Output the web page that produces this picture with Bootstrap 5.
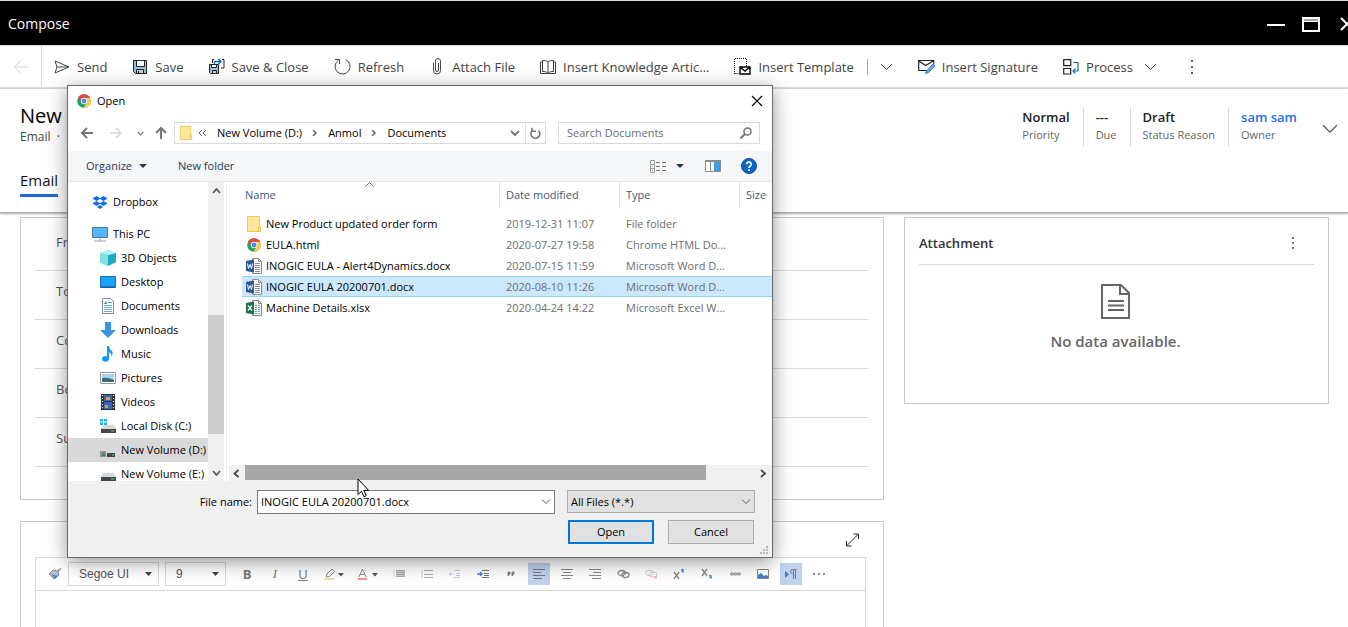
<!DOCTYPE html>
<html lang="en">
<head>
<meta charset="utf-8">
<meta name="viewport" content="width=device-width, initial-scale=1">
<title>Compose</title>
<link href="https://cdn.jsdelivr.net/npm/bootstrap@5.3.0/dist/css/bootstrap.min.css" rel="stylesheet">
<style>
:root { --line: #d8d8d8; --ink: #444; }
body { font-family: "Open Sans", "Noto Sans", sans-serif; font-size: 13px; line-height: 18px; color: #000; background: #fff; }
svg { display: block; flex: none; }
button, input, select { font-family: inherit; }
.plain { border: 0; background: none; padding: 0; color: inherit; }
input:focus { outline: 0; }

/* window title and command bar */
.title-bar { background: #000; color: #fff; height: 45px; border-top: 1px solid #d5dbe0; padding: 2px 0 0 8px; }
.title-bar h1 { font-size: 14px; line-height: 20px; }
.cmd-bar { height: 44px; border-top: 1px solid var(--line); border-bottom: 2px solid var(--line); color: var(--ink); }
.back-zone { width: 42px; border-right: 1px solid var(--line); }
.cmd { display: flex; align-items: center; gap: 7px; padding: 0 13px 0 12px; white-space: nowrap; border: 0; background: none; color: inherit; height: 100%; }
.cmd-split { width: 1px; height: 16px; background: #aaa; }

/* record header */
.rec-head { height: 124px; border-bottom: 1px solid #b3b3b3; box-shadow: 0 1px 2px rgba(0,0,0,.35); padding: 15px 10px 0 20px; }
.rec-head h2 { font-size: 20px; line-height: 24px; font-weight: 500; }
.rec-sub { font-size: 12px; color: #444; }
.tab-on { font-size: 15px; font-weight: 500; color: #111; line-height: 20px; padding: 0 0 4px; border-bottom: 3px solid #2266e3; text-decoration: none; }
.fact { padding: 0 13px 0 12px; height: 38px; border-right: 1px solid var(--line); line-height: 18px; }
.fact:last-of-type { border-right: 0; }
.fact b { display: block; font-weight: 600; color: #222; }
.fact span { display: block; font-size: 11px; color: #666; }
.fact a { font-weight: 600; color: #1f6ff0; text-decoration: none; display: block; }

/* form panels */
.form-grid { display: grid; grid-template-columns: 864fr 425fr; gap: 20px; padding: 4px 19px 0 20px; }
.form-col { gap: 21px; }
.panel { border: 1px solid #c8c8c8; background: #fff; }
.field { height: 49px; border-bottom: 1px solid var(--line); padding: 0 0 8px 21px; color: #555; gap: 20px; }
.field label { width: 120px; }
.fields { padding: 4px 15px 32px 14px; }
.attach-head { margin: 0 14px; height: 47px; border-bottom: 1px solid var(--line); padding: 3px 16px 0 0; font-weight: 600; color: #333; }
.empty-note { font-size: 15px; line-height: 20px; font-weight: 600; color: #666; }
.empty { padding: 19px 2px 52px 0; gap: 11px; }

/* rich text editor */
.editor { border: 1px solid var(--line); border-bottom: 0; margin: 0 17px 0 14px; }
.ed-tools { height: 33px; border-bottom: 1px solid var(--line); gap: 6px; padding-left: 8px; color: #777; }
.ed-btn { width: 22px; height: 22px; display: flex; align-items: center; justify-content: center; border: 0; padding: 0; background: none; color: inherit; flex: none; }
.ed-btn.wide { width: 28px; }
.ed-btn.on { background: #c1d1f0; }
.ed-select { height: 24px; border: 1px solid var(--line); border-radius: 0; font: 12px/18px "Liberation Sans", sans-serif; color: #555; padding: 0 10px; appearance: none; background: #fff url("data:image/svg+xml,%3Csvg xmlns='http://www.w3.org/2000/svg' width='7' height='4'%3E%3Cpath d='M0 0h7L3.500 4z' fill='%23444'/%3E%3C/svg%3E") no-repeat right 6px center; }
.ed-font { width: 91px; margin-left: -4px; }
.ed-size { width: 61px; }
.ed-body { height: 36px; border: 0; width: 100%; display: block; resize: none; }

/* file dialog */
.file-dlg { position: absolute; left: 67px; top: 85px; width: 706px; border: 1px solid #6a6a6a; background: #fff; box-shadow: 0 4px 18px rgba(0,0,0,.42); font-size: 11px; line-height: 16px; }
.dlg-title { height: 30px; padding: 0 9px; gap: 6px; }
.dlg-nav { padding: 6px 12px 7px 12px; color: #666; }
.box { border: 1px solid #d9d9d9; height: 22px; background: #fff; }
.addr { flex: 1; color: #000; gap: 10px; padding-left: 4px; margin-left: 7px; }
.search-box { width: 202px; padding: 0 7px 0 8px; margin-left: 12px; }
.search-box input { color: #000; }
.search-box input::placeholder { color: #6d6d6d; opacity: 1; }
.dlg-cmd { height: 31px; background: #f5f6f7; border-bottom: 1px solid #e4e6e8; padding: 0 15px 0 18px; color: #1e395b; }
.dlg-body { height: 299px; }
.tree { width: 140px; padding-top: 8px; overflow: hidden; flex: none; }
.tree a { display: flex; align-items: center; gap: 5px; height: 24px; padding-left: 32px; color: #000; text-decoration: none; white-space: nowrap; }
.tree a.root { padding-left: 24px; }
.tree a.current { background: #d9d9d9; }
.v-scroll { width: 16px; background: #f0f0f0; padding: 5px 0 4px; flex: none; }
.v-thumb { width: 16px; height: 119px; background: #cdcdcd; margin-bottom: 36px; }
.list-pane { flex: 1; min-width: 0; margin-left: 2px; border-left: 1px solid #ececec; }
.files { margin-left: 15px; flex: 1; overflow: hidden; position: relative; }
.files table { width: 100%; table-layout: fixed; border-collapse: separate; border-spacing: 0; }
.files th { font-weight: 400; padding: 0 0 5px; color: #44597a; }
.files th div { height: 26px; padding: 5px 0 0 6px; border-left: 1px solid #e2e2e2; }
.files th:first-child div { border: 0; padding-left: 3px; }
.files td { height: 21px; padding: 0 0 0 7px; color: #6d6d6d; white-space: nowrap; overflow: hidden; }
.files td:first-child { padding-left: 4px; color: #000; }
.files tr.picked td { background: #cce8ff; box-shadow: inset 0 1px #99d1ff, inset 0 -1px #99d1ff; }
.sort-mark { position: absolute; left: 123px; top: 0; }
.h-scroll { height: 16px; background: #f0f0f0; padding: 0 5px 0 4px; gap: 6px; margin-left: 2px; }
.h-thumb { width: 461px; height: 15px; background: #a6a6a6; align-self: flex-start; }
.dlg-foot { background: #f0f0f0; padding: 9px 17px 13px 0; position: relative; }
.dlg-foot label { padding: 4px 5px 0 0; }
.combo { border: 1px solid #7a7a7a; background: #fff; width: 298px; height: 24px; padding: 0 3px; margin-right: 12px; }
.type-select { width: 188px; height: 23px; border: 1px solid #adadad; border-radius: 0; background: #e1e1e1 url("data:image/svg+xml,%3Csvg xmlns='http://www.w3.org/2000/svg' width='10' height='6'%3E%3Cpath d='M1 .5l4 4 4-4' fill='none' stroke='%23555'/%3E%3C/svg%3E") no-repeat right 3px center; padding: 0 3px; appearance: none; color: #000; }
.dlg-actions { gap: 14px; margin: 6px 1px 0 0; }
.dlg-btn { width: 86px; height: 24px; border: 1px solid #adadad; background: #e1e1e1; color: #000; padding: 0; }
.dlg-btn.main { border: 2px solid #0078d7; }
.grip { position: absolute; right: 3px; bottom: 2px; }
.pointer { position: absolute; left: 357px; top: 478px; }
</style>
</head>
<body class="vh-100 overflow-hidden position-relative">

<svg width="0" height="0" class="position-absolute" aria-hidden="true">
  <symbol id="chrome" viewBox="0 0 16 16"><circle cx="8" cy="8" r="7.800" fill="#1da462"/><path d="M1.200 4.200A7.800 7.800 0 0 1 14.900 4.500H8A3.500 3.500 0 0 0 4.900 9.700z" fill="#dd4b3e"/><path d="M14.900 4.500A7.800 7.800 0 0 1 7.500 15.800L11 9.700A3.500 3.500 0 0 0 8 4.500z" fill="#ffcd42"/><circle cx="8" cy="8" r="3.600" fill="#fff"/><circle cx="8" cy="8" r="2.800" fill="#4a8af4"/></symbol>
  <symbol id="folder" viewBox="0 0 16 16"><path d="M1.500.5h12v10h1v5h-13z" fill="#ffe79a" stroke="#ecc852"/><path d="M12.500 10.500v5" stroke="#ecc852"/></symbol>
  <symbol id="word" viewBox="0 0 16 16"><path d="M6.500.5h6l3 3v12h-9z" fill="#fff" stroke="#8a8a8a"/><path d="M12.500.5v3h3M9 5.500h5M9 7.500h5M9 9.500h5M9 11.500h5M9 13.500h5" fill="none" stroke="#8a8a8a"/><path d="M0 3l8-1.500v13L0 13z" fill="#2b579a"/><path d="M1.500 5.500l1 5 1.500-4 1.500 4 1-5" fill="none" stroke="#fff"/></symbol>
  <symbol id="excel" viewBox="0 0 16 16"><path d="M6.500.5h6l3 3v12h-9z" fill="#fff" stroke="#8a8a8a"/><path d="M12.500.5v3h3" fill="none" stroke="#8a8a8a"/><path d="M9 5.500h2m1 0h2M9 7.500h2m1 0h2M9 9.500h2m1 0h2M9 11.500h2m1 0h2M9 13.500h2m1 0h2" stroke="#5fa583"/><path d="M0 3l8-1.500v13L0 13z" fill="#1e7145"/><path d="M2 5.500l4 5m0-5l-4 5" stroke="#fff" stroke-width="1.300"/></symbol>
  <symbol id="drive" viewBox="0 0 16 16"><path d="M3 7h11l2 4H1z" fill="#d5d8da"/><path d="M1 11h15v4H1z" fill="#43474b"/><path d="M11 12.500h3v1h-3z" fill="#3ee04a"/></symbol>
  <symbol id="chev" viewBox="0 0 12 8"><path d="M.500 1l5.500 5.500L11.500 1" fill="none" stroke="currentColor"/></symbol>
  <symbol id="smallchev" viewBox="0 0 10 6"><path d="M1 1l4 4 4-4" fill="none" stroke="currentColor" stroke-width="2"/></symbol>
  <symbol id="tri" viewBox="0 0 8 4"><path d="M0 0h8L4 4z" fill="currentColor"/></symbol>
</svg>

<header class="title-bar d-flex align-items-center">
  <h1 class="m-0 fw-normal">Compose</h1>
  <div class="ms-auto d-flex align-items-center gap-3 overflow-hidden">
    <button class="plain" aria-label="Minimize"><svg width="20" height="16"><path d="M1 9h18" stroke="#fff" stroke-width="2"/></svg></button>
    <button class="plain" aria-label="Maximize"><svg width="18" height="16"><path d="M1 2h16v13H1z" fill="none" stroke="#fff" stroke-width="2"/><path d="M2 4h14" stroke="#aaa" stroke-width="2"/><path d="M2 5.500h14" stroke="#fff"/></svg></button>
    <button class="plain" aria-label="Close"><svg width="8" height="16" class="ms-1"><path d="M1 2l12 12M1 14L13 2" stroke="#fff" stroke-width="2"/></svg></button>
  </div>
</header>

<nav class="cmd-bar d-flex align-items-center">
  <button class="plain back-zone h-100 d-flex align-items-center justify-content-center" aria-label="Back"><svg width="16" height="14"><path d="M15 7H1.500M8 .500L1.500 7 8 13.500" fill="none" stroke="#d0d0d0"/></svg></button>
  <button class="cmd"><svg width="16" height="16"><path d="M1 2l14 6-14 6 2-6zM3 8h12" fill="none" stroke="#444"/></svg>Send</button>
  <button class="cmd"><svg width="16" height="16"><path d="M1.500 1.500h13v13h-11l-2-2z" fill="#8fc3ee" stroke="#222"/><path d="M4.500 1.500h8v6h-8z" fill="#fff" stroke="#222"/><path d="M4.500 10.500h7v4h-7z" fill="#ccc" stroke="#222"/><path d="M6.500 12v2.500" stroke="#222"/></svg>Save</button>
  <button class="cmd"><svg width="16" height="17"><path d="M5 1.500H3.500V5M13 1.500h2V10h-3" fill="none" stroke="#222"/><path d="M5.500 6V3.500h6M9.500 1l2.500 2.500L9.500 6" fill="none" stroke="#1c6bb8" stroke-width="1.300"/><path d="M.5 6.500h9v9h-8l-1-1z" fill="#8fc3ee" stroke="#222"/><path d="M2.500 6.500h5v3h-5z" fill="#fff" stroke="#222"/><path d="M3.500 12.500h4v3h-4z" fill="#ccc" stroke="#222"/></svg>Save &amp; Close</button>
  <button class="cmd"><svg width="17" height="17"><path d="M11.500 1.600A7.500 7.500 0 1 1 4.500 2.200M1 1.500h4.500V6" fill="none" stroke="#444"/></svg>Refresh</button>
  <button class="cmd"><svg width="16" height="17"><path d="M4.500 4.500v8a3.500 3.500 0 0 0 7 0V3a2.500 2.500 0 0 0-5 0v9a1.500 1.500 0 0 0 3 0V5" fill="none" stroke="#444"/></svg>Attach File</button>
  <button class="cmd"><svg width="16" height="16"><path d="M8 3C6.500 1.500 4.500 1.500 2.500 1.500v11c2 0 4 0 5.500 2 1.500-2 3.500-2 5.500-2v-11c-2 0-4 0-5.500 1.500zv11M2.500 3H.5v11.500h15V3h-2" fill="none" stroke="#444"/></svg>Insert Knowledge Artic...</button>
  <button class="cmd"><svg width="17" height="17"><path d="M.500 16V.500h12V8M.500 15.500H5" fill="none" stroke="#000" stroke-dasharray="1 1"/><path d="M6 9h10v7H6zM6 9l5 4 5-4" fill="#fff" stroke="#000" stroke-width="1.400"/></svg>Insert Template</button>
  <span class="cmd-split"></span>
  <button class="cmd" aria-label="More templates"><svg width="13" height="8"><use href="#chev"/></svg></button>
  <button class="cmd"><svg width="17" height="15"><path d="M9 11.500H.700V1.500h15V5M.700 2l7 4.500 7.500-4.500" fill="none" stroke="#222" stroke-width="1.200"/><path d="M15.500 4.500l-6.500 7-1.500 3 3-1 6-6.500z" fill="#6fb2ea" stroke="#2a74b8"/></svg>Insert Signature</button>
  <button class="cmd"><svg width="16" height="16"><path d="M.700.700h7v6h-7zM.700 9.500h7v5.500h-7z" fill="none" stroke="#222" stroke-width="1.200"/><path d="M10 3.500h5v8.500h-4.500M12.500 9.500L10 12l2.500 2.500" fill="none" stroke="#1c6bb8" stroke-width="1.200"/></svg>Process <svg width="13" height="8" class="ms-1"><use href="#chev"/></svg></button>
  <button class="cmd ms-2" aria-label="More commands"><svg width="3" height="15"><path d="M1 1h2v2H1zM1 7h2v2H1zM1 13h2v2H1z" fill="#555"/></svg></button>
</nav>

<section class="rec-head d-flex">
  <div>
    <h2 class="m-0">New Email</h2>
    <div class="rec-sub">Email &nbsp;· &nbsp;Email</div>
    <a class="tab-on d-inline-block mt-4" href="#">Email</a>
  </div>
  <div class="ms-auto d-flex align-items-start pt-1">
    <div class="fact"><b>Normal</b><span>Priority</span></div>
    <div class="fact"><b>---</b><span>Due</span></div>
    <div class="fact"><b>Draft</b><span>Status Reason</span></div>
    <div class="fact"><a href="#">sam sam</a><span>Owner</span></div>
    <button class="plain mt-3 ms-2 ps-1" aria-label="Expand header"><svg width="16" height="10" style="color:#555"><use href="#chev"/></svg></button>
  </div>
</section>

<main class="form-grid align-items-start">
  <div class="form-col d-flex flex-column">
    <section class="panel fields">
      <div class="field d-flex align-items-center"><label for="f1">From</label><input id="f1" class="plain flex-fill"></div>
      <div class="field d-flex align-items-center"><label for="f2">To</label><input id="f2" class="plain flex-fill"></div>
      <div class="field d-flex align-items-center"><label for="f3">Cc</label><input id="f3" class="plain flex-fill"></div>
      <div class="field d-flex align-items-center"><label for="f4">Bcc</label><input id="f4" class="plain flex-fill"></div>
      <div class="field d-flex align-items-center"><label for="f5">Subject</label><input id="f5" class="plain flex-fill"></div>
    </section>
    <section class="panel border-bottom-0">
      <div class="d-flex justify-content-end align-items-center py-2 px-4"><button class="plain" aria-label="Expand editor"><svg width="13" height="19"><path d="M1 15.500L12 4.500M7.500 4H12.500V9M.500 11v5h5" fill="none" stroke="#222"/></svg></button></div>
      <div class="editor">
        <div class="ed-tools d-flex align-items-center">
          <button class="ed-btn" aria-label="Format painter"><svg width="14" height="14"><path d="M13 1L9 4 5 3 1 7l5 5 5-4-1-3z" fill="#b9bec6" stroke="#8b9099"/><path d="M3 7l4 5 3-3z" fill="#4c86d0"/></svg></button>
          <select class="ed-select ed-font" aria-label="Font"><option>Segoe UI</option></select>
          <select class="ed-select ed-size me-1" aria-label="Size"><option>9</option></select>
          <button class="ed-btn fw-bold" aria-label="Bold">B</button>
          <button class="ed-btn fst-italic" style="font-family:'Liberation Serif',serif" aria-label="Italic">I</button>
          <button class="ed-btn text-decoration-underline" aria-label="Underline">U</button>
          <button class="ed-btn wide" aria-label="Highlight"><svg width="20" height="12"><path d="M2 9l1-3 5-5 2.500 2.500-5 5z" fill="none" stroke="#888"/><path d="M0 11h10" stroke="#f3d98a" stroke-width="1.500"/><path d="M14 5h6l-3 3.500z" fill="#555"/></svg></button>
          <button class="ed-btn wide" aria-label="Text color"><svg width="20" height="12"><path d="M1 9L4.500 1 8 9M2.500 6.500h4" fill="none" stroke="#888"/><path d="M0 11h9" stroke="#e8705c" stroke-width="1.500"/><path d="M14 5h6l-3 3.500z" fill="#555"/></svg></button>
          <button class="ed-btn" aria-label="Bulleted list"><svg width="12" height="10"><path d="M3 1.500h9M3 3.500h9M3 5.500h9M3 7.500h9" stroke="#aaa"/><path d="M3 2.500h9M3 4.500h9M3 6.500h9" stroke="#ccc"/><path d="M1 1v7" stroke="#c5d5ee"/></svg></button>
          <button class="ed-btn" aria-label="Numbered list"><svg width="12" height="10"><path d="M3 1.500h9M3 5.500h9M3 8.500h9" stroke="#aaa"/><path d="M1 1v8" stroke="#b8cdee"/></svg></button>
          <button class="ed-btn" aria-label="Decrease indent"><svg width="12" height="10"><path d="M5 1.500h6M7 4.500h4M7 6.500h4M5 8.500h6" stroke="#ccc"/><path d="M0 5h5M2 3L0 5l2 2" fill="none" stroke="#b8cdee"/></svg></button>
          <button class="ed-btn" aria-label="Increase indent"><svg width="12" height="10"><path d="M5 1.500h7M7 4.500h5M7 6.500h5M5 8.500h7" stroke="#777"/><path d="M0 5h5M3 3l2 2-2 2" fill="none" stroke="#3f7fd6" stroke-width="1.300"/></svg></button>
          <button class="ed-btn" aria-label="Quote"><svg width="8" height="6"><path d="M1 1h2v2L1 5zM5 1h2v2L5 5z" fill="#777" stroke="#888"/></svg></button>
          <button class="ed-btn on" aria-label="Align left"><svg width="12" height="12"><path d="M0 1.500h12M0 4.500h8M0 7.500h12M0 10.500h9" stroke="#777"/></svg></button>
          <button class="ed-btn" aria-label="Align center"><svg width="12" height="12"><path d="M0 1.500h12M2 4.500h8M0 7.500h12M2 10.500h8" stroke="#888"/></svg></button>
          <button class="ed-btn" aria-label="Align right"><svg width="12" height="12"><path d="M0 1.500h12M4 4.500h8M0 7.500h12M3 10.500h9" stroke="#888"/></svg></button>
          <button class="ed-btn" aria-label="Link"><svg width="13" height="10"><ellipse cx="4.500" cy="4" rx="3.500" ry="2.500" fill="none" stroke="#888" stroke-width="1.300"/><ellipse cx="8.500" cy="6" rx="3.500" ry="2.500" fill="none" stroke="#888" stroke-width="1.300"/></svg></button>
          <button class="ed-btn" aria-label="Unlink"><svg width="13" height="11"><ellipse cx="4.500" cy="4" rx="4" ry="2.500" fill="none" stroke="#ccc"/><ellipse cx="8" cy="5.500" rx="4" ry="2.500" fill="none" stroke="#ccc"/><path d="M9 7l3 3M12 7l-3 3" stroke="#e9a79b"/></svg></button>
          <button class="ed-btn" aria-label="Superscript"><svg width="12" height="12"><path d="M1 4l5 7M6 4l-5 7" stroke="#888" stroke-width="1.300"/><path d="M8 2l2-1v4M8 3h3" fill="none" stroke="#3f7fd6"/></svg></button>
          <button class="ed-btn" aria-label="Subscript"><svg width="12" height="12"><path d="M1 1l5 7M6 1L1 8" stroke="#888" stroke-width="1.300"/><path d="M8 8l2-1v4M8 9h3" fill="none" stroke="#3f7fd6"/></svg></button>
          <button class="ed-btn" aria-label="Strikethrough"><svg width="11" height="6"><circle cx="2" cy="3" r="1.500" fill="none" stroke="#bbb"/><circle cx="5.500" cy="3" r="1.500" fill="none" stroke="#bbb"/><circle cx="9" cy="3" r="1.500" fill="none" stroke="#bbb"/><path d="M0 3h11" stroke="#777"/></svg></button>
          <button class="ed-btn" aria-label="Image"><svg width="12" height="10"><path d="M.500.500h11v9H.500z" fill="#fff" stroke="#888"/><path d="M1 9V6l3-2 3 3 2-1 2 1v2z" fill="#3f7fc6"/></svg></button>
          <button class="ed-btn on" aria-label="Left to right"><svg width="12" height="12"><path d="M0 3l4 3.500L0 10z" fill="#3f7fd6"/><path d="M11.500 1.500H7.500a2 2 0 0 0 0 4M8.500 1v10M10.500 1v10" fill="none" stroke="#777"/></svg></button>
          <button class="ed-btn" aria-label="More"><svg width="12" height="4"><path d="M0 1h2v2H0zM5 1h2v2H5zM10 1h2v2h-2z" fill="#888"/></svg></button>
        </div>
        <textarea class="ed-body" aria-label="Message"></textarea>
      </div>
    </section>
  </div>

  <section class="panel">
    <div class="attach-head d-flex align-items-center"><span>Attachment</span><button class="plain ms-auto" aria-label="Attachment menu"><svg width="10" height="14"><path d="M4 1h2v2H4zM4 6h2v2H4zM4 11h2v2H4z" fill="#8b7355"/></svg></button></div>
    <div class="empty d-flex flex-column align-items-center">
      <svg width="30" height="36"><path d="M1 1h19l8 8v25H1z" fill="none" stroke="#666" stroke-width="2"/><path d="M19 1v9h9M7 17h16M7 21.500h16M7 26h16" fill="none" stroke="#666" stroke-width="2"/></svg>
      <span class="empty-note">No data available.</span>
    </div>
  </section>
</main>

<div class="file-dlg" role="dialog" aria-label="Open">
  <div class="dlg-title d-flex align-items-center">
    <svg width="14" height="14"><use href="#chrome"/></svg><span class="me-auto">Open</span>
    <button class="plain" aria-label="Close dialog"><svg width="12" height="12"><path d="M1 1l10 10M11 1L1 11" stroke="#000" stroke-width="1.100"/></svg></button>
  </div>
  <div class="dlg-nav d-flex align-items-center">
    <button class="plain" aria-label="Back to previous folder"><svg width="14" height="12"><path d="M13 6H2M7 1L2 6l5 5" fill="none" stroke="#777" stroke-width="2"/></svg></button>
    <button class="plain ms-3" aria-label="Forward"><svg width="14" height="12"><path d="M0 6h11M6 1l5 5-5 5" fill="none" stroke="#ddd" stroke-width="2"/></svg></button>
    <button class="plain" style="margin-left:13px;color:#888" aria-label="Recent locations"><svg width="7" height="5"><use href="#smallchev"/></svg></button>
    <button class="plain" style="margin-left:11px" aria-label="Up one level"><svg width="12" height="14"><path d="M6 13V2M1 7l5-5 5 5" fill="none" stroke="#777" stroke-width="2"/></svg></button>
    <div class="box addr d-flex align-items-center">
      <svg width="14" height="16"><use href="#folder"/></svg>
      <svg width="9" height="6" style="margin-left:-5px"><path d="M4 0L1 3l3 3M8 0L5 3l3 3" fill="none" stroke="#555"/></svg>
      <span>New Volume (D:)</span><svg width="6" height="6"><path d="M1 0l3 3-3 3" fill="none" stroke="#666" stroke-width="1.500"/></svg>
      <span>Anmol</span><svg width="6" height="6"><path d="M1 0l3 3-3 3" fill="none" stroke="#666" stroke-width="1.500"/></svg>
      <span>Documents</span>
      <svg width="10" height="6" class="ms-auto" style="color:#777"><use href="#smallchev"/></svg>
      <button class="plain border-start h-100 px-1" aria-label="Refresh folder" style="margin-left:-5px"><svg width="11" height="12"><path d="M3 3A4.500 4.500 0 1 0 8.500 3.500M2 .700v3.500h4" fill="none" stroke="#777" stroke-width="1.600"/></svg></button>
    </div>
    <div class="box search-box d-flex align-items-center">
      <input class="plain flex-fill" placeholder="Search Documents" aria-label="Search Documents">
      <svg width="12" height="12"><circle cx="7.500" cy="4.500" r="3.500" fill="none" stroke="#777" stroke-width="1.600"/><path d="M5 7l-4.500 4.500" stroke="#777" stroke-width="2"/></svg>
    </div>
  </div>
  <div class="dlg-cmd d-flex align-items-center">
    <button class="plain d-flex align-items-center" style="gap:7px">Organize <svg width="8" height="4"><use href="#tri"/></svg></button>
    <button class="plain" style="margin-left:31px">New folder</button>
    <button class="plain ms-auto d-flex align-items-center" style="gap:10px" aria-label="Change view"><svg width="16" height="13"><path d="M.500.500h4v12h-4zM.500 4.500h4M.500 8.500h4" fill="#fff" stroke="#999"/><path d="M6 2.500h4m2 0h4M6 6.500h4m2 0h4M6 10.500h4m2 0h4" stroke="#777"/><path d="M2 6h1v1H2z" fill="#4a8"/><path d="M2 10h1v1H2z" fill="#c33"/></svg><svg width="8" height="4"><use href="#tri"/></svg></button>
    <button class="plain" style="margin-left:21px" aria-label="Preview pane"><svg width="16" height="12"><path d="M.500.500h15v11H.500zM5.500 1v11" fill="#fff" stroke="#8a8a8a"/><path d="M0 1h16" stroke="#8a8a8a" stroke-width="2"/><path d="M9 2h6v9H9z" fill="#3c9ae8"/></svg></button>
    <button class="plain ms-3" aria-label="Help"><svg width="20" height="16"><circle cx="12" cy="8" r="7.500" fill="#0a66c8" stroke="#0b4f9a"/><path d="M9.800 6.200a2.200 2.200 0 1 1 3.400 1.800q-1.200.8-1.200 2" fill="none" stroke="#fff" stroke-width="1.700"/><path d="M11 11.200h2v1.800h-2z" fill="#fff"/></svg></button>
  </div>
  <div class="dlg-body d-flex">
    <nav class="tree" aria-label="Folders">
      <a class="root mb-2" href="#"><svg width="16" height="15"><path d="M4.500 1l4 2.500-4 2.500-4-2.500zM11.500 1l4 2.500-4 2.500-4-2.500zM4.500 6l4 2.500-4 2.500-4-2.500zM11.500 6l4 2.500-4 2.500-4-2.500zM8 10l3 2-3 2-3-2z" fill="#0f6bfa"/></svg>Dropbox</a>
      <a class="root" href="#"><svg width="16" height="15"><path d="M.500.500h15v10H.500z" fill="#54b7fa" stroke="#4c7c9b"/><path d="M8 11v3M2 14h12" stroke="#8da0ae"/></svg>This PC</a>
      <a href="#"><svg width="16" height="16"><path d="M0 3l8-3 8 3v9l-8 4-8-3z" fill="#7fe0e8"/><path d="M8 5l8-2v9l-8 4z" fill="#22a7c4"/><path d="M0 3l8-3 8 3-8 2z" fill="#b5f1f3"/></svg>3D Objects</a>
      <a href="#"><svg width="16" height="12"><path d="M.500.500h15v11H.500z" fill="#18a0fb" stroke="#1071b5"/><path d="M1 11h14" stroke="#16527f"/></svg>Desktop</a>
      <a href="#"><svg width="16" height="16"><path d="M2.500.500h8l3 3v12h-11z" fill="#fff" stroke="#888"/><path d="M8 4.500h4M4 7.500h8M4 9.500h8M4 11.500h8M4 13.500h8" stroke="#6fa6c4"/><path d="M4 6l2-3 1 3z" fill="#2585bd"/></svg>Documents</a>
      <a href="#"><svg width="16" height="16"><path d="M5 0h6v8h5l-8 8-8-8h5z" fill="#3a94e4"/></svg>Downloads</a>
      <a href="#"><svg width="16" height="16"><path d="M7 0h2q0 3 3 5 1.500 2-.5 5 0-3-2.500-4v7a3.500 2.800 0 1 1-2-2.600z" fill="#0c9bf5"/></svg>Music</a>
      <a href="#"><svg width="16" height="12"><path d="M.500.500h15v11H.500z" fill="#fff" stroke="#999"/><path d="M2 2h12v8H2z" fill="#a9d4f5"/><path d="M2 6q6-1 12 2v2H2z" fill="#3c6f7e"/></svg>Pictures</a>
      <a href="#"><svg width="16" height="16"><path d="M1 0h14v16H1z" fill="#333"/><path d="M4 1h8v6H4zM4 8h8v7H4z" fill="#3a62c8"/><path d="M6 3h4v3H6zM5 11h3v3H5z" fill="#d9a12c"/><path d="M2.500 1v15M13.500 1v15" stroke="#fff" stroke-dasharray="1 2"/></svg>Videos</a>
      <a href="#"><svg width="16" height="16"><use href="#drive"/><path d="M0 1h3v2.500H0zM4 1h3v2.500H4zM0 4.500h3V7H0zM4 4.500h3V7H4z" fill="#19b6ee"/></svg>Local Disk (C:)</a>
      <a class="current" href="#"><svg width="16" height="16"><path d="M8 9h7l1 2H7z" fill="#d5d8da"/><path d="M7 11h8v4H7z" fill="#43474b"/><path d="M12 12.500h2v1h-2z" fill="#3ee04a"/><path d="M0 9h6v6H0z" fill="#8a9a9e"/><path d="M1 14l3-4 2 4z" fill="#557b57"/></svg>New Volume (D:)</a>
      <a href="#"><svg width="16" height="16"><use href="#drive"/></svg>New Volume (E:)</a>
    </nav>
    <div class="v-scroll d-flex flex-column align-items-center">
      <svg width="9" height="7"><path d="M1 6l3.500-4L8 6" fill="none" stroke="#555" stroke-width="1.800"/></svg>
      <div class="v-thumb mt-auto"></div>
      <svg width="9" height="7"><path d="M1 1l3.500 4L8 1" fill="none" stroke="#555" stroke-width="1.800"/></svg>
    </div>
    <div class="list-pane d-flex flex-column">
      <div class="files">
        <svg class="sort-mark" width="9" height="5"><path d="M.500 4.500l4-4 4 4" fill="none" stroke="#666"/></svg>
        <table>
          <colgroup><col style="width:257px"><col style="width:120px"><col style="width:120px"><col></colgroup>
          <thead><tr><th><div>Name</div></th><th><div>Date modified</div></th><th><div>Type</div></th><th><div>Size</div></th></tr></thead>
          <tbody>
            <tr><td><span class="d-flex align-items-center gap-1"><svg width="16" height="16"><use href="#folder"/></svg>New Product updated order form</span></td><td>2019-12-31 11:07</td><td>File folder</td><td></td></tr>
            <tr><td><span class="d-flex align-items-center gap-1"><svg width="16" height="14"><use href="#chrome"/></svg>EULA.html</span></td><td>2020-07-27 19:58</td><td>Chrome HTML Do...</td><td></td></tr>
            <tr><td><span class="d-flex align-items-center gap-1"><svg width="16" height="16"><use href="#word"/></svg>INOGIC EULA - Alert4Dynamics.docx</span></td><td>2020-07-15 11:59</td><td>Microsoft Word D...</td><td></td></tr>
            <tr class="picked"><td><span class="d-flex align-items-center gap-1"><svg width="16" height="16"><use href="#word"/></svg>INOGIC EULA 20200701.docx</span></td><td>2020-08-10 11:26</td><td>Microsoft Word D...</td><td></td></tr>
            <tr><td><span class="d-flex align-items-center gap-1"><svg width="16" height="16"><use href="#excel"/></svg>Machine Details.xlsx</span></td><td>2020-04-24 14:22</td><td>Microsoft Excel W...</td><td></td></tr>
          </tbody>
        </table>
      </div>
      <div class="h-scroll d-flex align-items-center">
        <svg width="6" height="9"><path d="M5.500 1l-4 3.500 4 3.500" fill="none" stroke="#444" stroke-width="1.800"/></svg>
        <div class="h-thumb"></div>
        <svg width="7" height="9" class="ms-auto"><path d="M1 1l4 3.500L1 8" fill="none" stroke="#444" stroke-width="1.800"/></svg>
      </div>
    </div>
  </div>
  <div class="dlg-foot">
    <div class="d-flex justify-content-end align-items-start">
      <label for="fname">File name:</label>
      <div class="combo d-flex align-items-center"><input id="fname" class="plain flex-fill" value="INOGIC EULA 20200701.docx"><svg width="10" height="6"><path d="M1 .500l4 4 4-4" fill="none" stroke="#555"/></svg></div>
      <select class="type-select" aria-label="File type"><option>All Files (*.*)</option></select>
    </div>
    <div class="dlg-actions d-flex justify-content-end">
      <button class="dlg-btn main">Open</button><button class="dlg-btn">Cancel</button>
    </div>
    <svg class="grip" width="9" height="9"><path d="M6 0h2v2H6zM3 3h2v2H3zM6 3h2v2H6zM0 6h2v2H0zM3 6h2v2H3zM6 6h2v2H6z" fill="#bbb"/></svg>
  </div>
</div>

<svg class="pointer" width="13" height="20"><path d="M1 1v15.500l3.500-3.300 2.400 5.500 2.300-1-2.400-5.400H11.500z" fill="#fff" stroke="#000"/></svg>

<script src="https://cdn.jsdelivr.net/npm/bootstrap@5.3.0/dist/js/bootstrap.bundle.min.js"></script>
</body>
</html>
